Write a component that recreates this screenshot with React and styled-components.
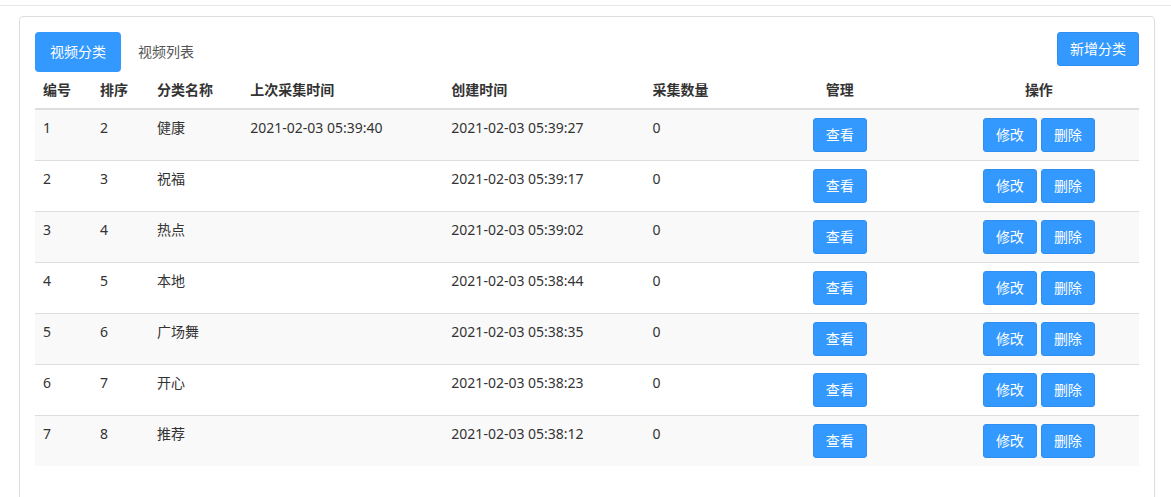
import React from 'react';
import styled, { createGlobalStyle } from 'styled-components';

const GlobalStyle = createGlobalStyle`
  html, body {
    margin: 0;
    padding: 0;
    background: #fff;
  }
  body {
    font-family: "Noto Sans", "Noto Sans CJK SC", sans-serif;
    font-size: 14px;
    color: #333;
  }
`;

const TopBar = styled.div`
  height: 5px;
  border-bottom: 1px solid #e7e7e7;
`;

const Page = styled.div`
  padding: 10px 16px 0 19px;
`;

const Panel = styled.div`
  border: 1px solid #ddd;
  border-radius: 4px;
  padding: 15px 15px 30px;
  min-height: 480px;
`;

const Toolbar = styled.div`
  display: flex;
  justify-content: space-between;
  align-items: flex-start;
`;

const Pills = styled.ul`
  display: flex;
  list-style: none;
  margin: 0;
  padding: 0;
`;

const Pill = styled.li`
  margin-right: 2px;
  padding: 10px 15px;
  line-height: 20px;
  border-radius: 4px;
  cursor: pointer;
  ${({ active }) =>
    active ? 'background: #3399ff; color: #fff;' : 'color: #555;'}
`;

const Button = styled.button`
  font-family: inherit;
  font-size: 14px;
  line-height: 20px;
  padding: 6px 12px;
  color: #fff;
  background: #3399ff;
  border: 1px solid #2f8ff0;
  border-radius: 3px;
  cursor: pointer;

  & + & {
    margin-left: 4px;
  }
`;

const Table = styled.table`
  width: 100%;
  table-layout: fixed;
  border-collapse: collapse;
  border-spacing: 0;
`;

const Th = styled.th`
  box-sizing: border-box;
  text-align: ${({ center }) => (center ? 'center' : 'left')};
  font-weight: bold;
  padding: 8px;
  line-height: 20px;
  border-bottom: 2px solid #ddd;
  width: ${({ w }) => w}px;
`;

const Row = styled.tr`
  background: ${({ striped }) => (striped ? '#f9f9f9' : '#fff')};
`;

const Td = styled.td`
  text-align: ${({ center }) => (center ? 'center' : 'left')};
  vertical-align: top;
  padding: 8px;
  line-height: 20px;
  white-space: nowrap;
  border-top: ${({ first }) => (first ? 'none' : '1px solid #ddd')};
`;

const rows = [
  [1, 2, '健康', '2021-02-03 05:39:40', '2021-02-03 05:39:27', 0],
  [2, 3, '祝福', '', '2021-02-03 05:39:17', 0],
  [3, 4, '热点', '', '2021-02-03 05:39:02', 0],
  [4, 5, '本地', '', '2021-02-03 05:38:44', 0],
  [5, 6, '广场舞', '', '2021-02-03 05:38:35', 0],
  [6, 7, '开心', '', '2021-02-03 05:38:23', 0],
  [7, 8, '推荐', '', '2021-02-03 05:38:12', 0],
];

export default function App() {
  return (
    <>
      <GlobalStyle />
      <TopBar />
      <Page>
        <Panel>
          <Toolbar>
            <Pills>
              <Pill active>视频分类</Pill>
              <Pill>视频列表</Pill>
            </Pills>
            <Button>新增分类</Button>
          </Toolbar>
          <Table>
            <thead>
              <tr>
                <Th w={57}>编号</Th>
                <Th w={57}>排序</Th>
                <Th w={93}>分类名称</Th>
                <Th w={201}>上次采集时间</Th>
                <Th w={201}>创建时间</Th>
                <Th w={96}>采集数量</Th>
                <Th w={198} center>管理</Th>
                <Th w={200} center>操作</Th>
              </tr>
            </thead>
            <tbody>
              {rows.map((r, i) => (
                <Row key={r[0]} striped={i % 2 === 0}>
                  {r.map((c, j) => (
                    <Td key={j} first={i === 0}>{c}</Td>
                  ))}
                  <Td center first={i === 0}>
                    <Button>查看</Button>
                  </Td>
                  <Td center first={i === 0}>
                    <Button>修改</Button>
                    <Button>删除</Button>
                  </Td>
                </Row>
              ))}
            </tbody>
          </Table>
        </Panel>
      </Page>
    </>
  );
}
